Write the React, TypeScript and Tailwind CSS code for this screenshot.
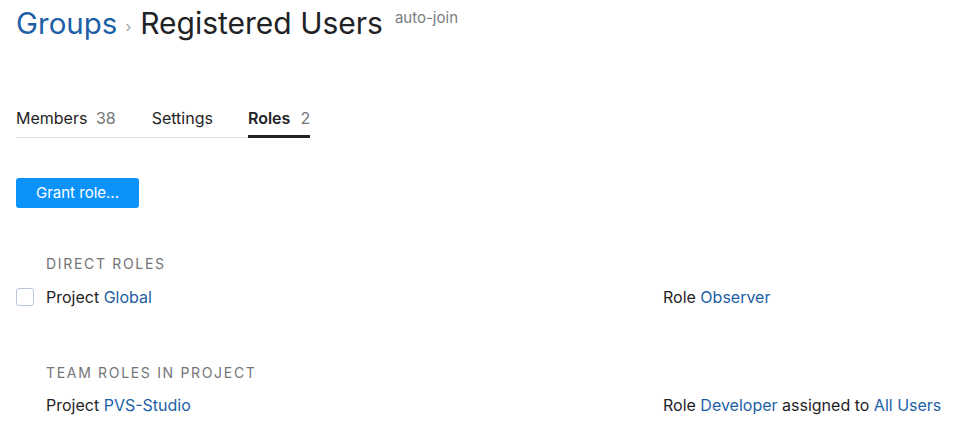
const link = "text-[#1d5fa6]";

function SectionTitle({ children }: { children: string }) {
  return (
    <div className="pl-[30px] text-[14px] uppercase tracking-[0.12em] text-[#737577] leading-5">
      {children}
    </div>
  );
}

function RoleRow({
  checkbox,
  project,
  role,
  assigned,
}: {
  checkbox?: boolean;
  project: string;
  role: string;
  assigned?: string;
}) {
  return (
    <div className="flex items-center h-[22px]">
      <div className="w-[30px] shrink-0">
        {checkbox && (
          <div className="w-[18px] h-[18px] rounded-[3px] border border-[#b8c6d6] bg-white" />
        )}
      </div>
      <div className="w-[617px] shrink-0">
        Project <span className={link}>{project}</span>
      </div>
      <div>
        Role <span className={link}>{role}</span>
        {assigned && (
          <>
            {" "}assigned to <span className={link}>{assigned}</span>
          </>
        )}
      </div>
    </div>
  );
}

export default function App() {
  return (
    <div
      className="w-[975px] h-[436px] bg-white px-4 text-[16px] text-[#1f2326] overflow-hidden"
      style={{ fontFamily: "Inter, 'Noto Sans', sans-serif" }}
    >
      <div className="flex items-start pt-[2px]">
        <span className={`text-[29.5px] leading-[42px] ${link}`}>Groups</span>
        <span className="text-[15px] leading-[42px] text-[#a0a3a6] ml-[8px] mr-[9px] pt-[4px]">›</span>
        <span className="text-[30px] leading-[42px]">Registered Users</span>
        <span className="ml-[12px] text-[15px] leading-5 mt-[6px] text-[#7a7d80]">auto-join</span>
      </div>

      <div className="mt-[57px] flex w-fit border-b border-[#dfe3e8]">
        <div className="pt-px pb-[7px] mr-[36px]">
          Members <span className="ml-1 text-[#737577]">38</span>
        </div>
        <div className="pt-px pb-[7px] mr-[35px]">Settings</div>
        <div className="pt-px pb-[5px] border-b-[3px] border-[#1f2326] -mb-px font-semibold">
          Roles <span className="ml-[6px] font-normal text-[#737577]">2</span>
        </div>
      </div>

      <button className="mt-[40px] h-[30px] w-[123px] rounded-[3px] bg-[#0b93fb] text-white text-[15px]">
        Grant role...
      </button>

      <div className="mt-[46px]">
        <SectionTitle>Direct roles</SectionTitle>
        <div className="mt-[12px]">
          <RoleRow checkbox project="Global" role="Observer" />
        </div>
      </div>

      <div className="mt-[55px]">
        <SectionTitle>Team roles in project</SectionTitle>
        <div className="mt-[11px]">
          <RoleRow project="PVS-Studio" role="Developer" assigned="All Users" />
        </div>
      </div>
    </div>
  );
}
